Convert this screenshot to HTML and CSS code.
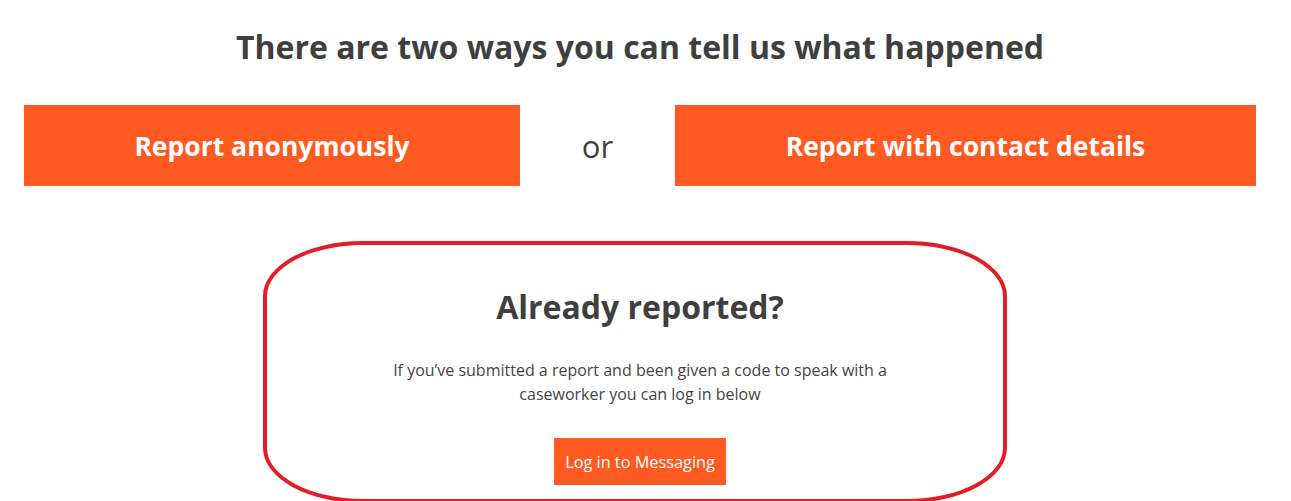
FILE: index.html
```html
<!DOCTYPE html>
<html lang="en">
<head>
<meta charset="utf-8">
<title>Report</title>
<link rel="stylesheet" href="styles.css">
</head>
<body>
<main class="page">
  <h1 class="title">There are two ways you can tell us what happened</h1>
  <div class="choices">
    <a class="big-btn" href="#">Report anonymously</a>
    <span class="or">or</span>
    <a class="big-btn wide" href="#">Report with contact details</a>
  </div>
  <section class="already">
    <h2 class="already-title">Already reported?</h2>
    <p class="already-text">If you’ve submitted a report and been given a code to speak with a caseworker you can log in below</p>
    <a class="small-btn" href="#">Log in to Messaging</a>
  </section>
</main>
</body>
</html>
```

FILE: styles.css
```css
* { box-sizing: border-box; }
html, body { margin: 0; padding: 0; background: #fff; }
body {
  font-family: "Open Sans", "Liberation Sans", sans-serif;
  color: #3f3f3f;
  overflow: hidden;
  height: 501px;
}
.page {
  width: 1232px;
  margin-left: 24px;
  padding-top: 27px;
  display: flex;
  flex-direction: column;
  align-items: center;
}
.title {
  margin: 0;
  font-size: 32px;
  font-weight: 700;
  line-height: 40px;
  color: #3f3f3f;
}
.choices {
  margin-top: 38px;
  width: 100%;
  display: flex;
  align-items: center;
}
.big-btn {
  display: flex;
  align-items: center;
  justify-content: center;
  height: 81px;
  width: 496px;
  background: #fe5a22;
  color: #fff;
  text-decoration: none;
  font-weight: 700;
  font-size: 26.5px;
}
.big-btn.wide { width: 581px; }
.or {
  flex: 1;
  text-align: center;
  font-size: 31px;
  color: #3f3f3f;
}
.already {
  margin-top: 55px;
  margin-left: -10px;
  width: 744px;
  height: 262px;
  border: 4px solid #e31d25;
  border-radius: 100px / 55px;
  display: flex;
  flex-direction: column;
  align-items: center;
  padding-top: 42px;
}
.already-title {
  margin: 0 0 0 10px;
  font-size: 32px;
  font-weight: 700;
  line-height: 40px;
  color: #3f3f3f;
}
.already-text {
  margin: 31px 0 0 10px;
  width: 500px;
  text-align: center;
  font-size: 16px;
  line-height: 24px;
  color: #444;
}
.small-btn {
  margin: 32px 0 0 10px;
  display: flex;
  align-items: center;
  justify-content: center;
  height: 47px;
  padding: 0 11px;
  background: #fe5a22;
  color: #fff;
  text-decoration: none;
  font-size: 16.3px;
}
```
